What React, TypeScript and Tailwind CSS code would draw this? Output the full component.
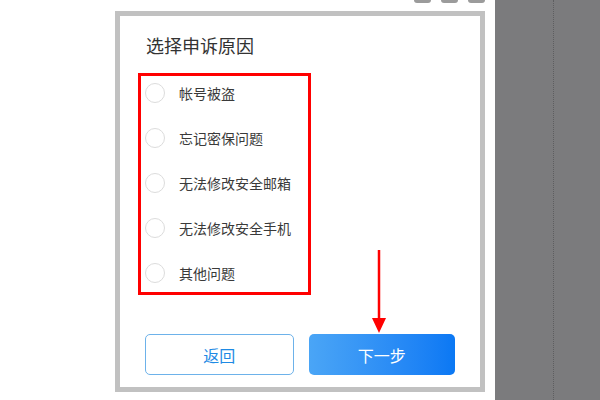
const reasons = ['帐号被盗', '忘记密保问题', '无法修改安全邮箱', '无法修改安全手机', '其他问题'];

export default function App() {
  return (
    <div
      className="flex h-[400px] w-[600px] overflow-hidden bg-white"
      style={{ fontFamily: '"Noto Sans CJK SC", "Noto Sans", sans-serif' }}
    >
      {/* Page area */}
      <div className="flex w-[495px] flex-col">
        {/* Window buttons, cut off at the top */}
        <div className="flex h-[11px] items-start justify-end gap-[10px] pr-[10px]">
          <span className="h-[3px] w-[17px] rounded-b-[4px] bg-[#9b9b9b]" />
          <span className="h-[3px] w-[17px] rounded-b-[4px] bg-[#9b9b9b]" />
          <span className="h-[3px] w-[17px] rounded-b-[4px] bg-[#9b9b9b]" />
        </div>

        {/* Dialog */}
        <div className="relative ml-[115px] flex h-[381px] w-[370px] flex-col border-[5px] border-[#c1c1c1] bg-white">
          <h3 className="pl-[26px] pt-[17px] text-[18px] leading-[24px] font-normal text-[#333]">选择申诉原因</h3>

          <div className="ml-[18px] mt-[16px] flex w-[173px] flex-col gap-[25px] border-[3px] border-[#ff0000] pb-[9px] pl-[4px] pt-[7px]">
            {reasons.map((r) => (
              <label key={r} className="flex h-[20px] items-center gap-[14px]">
                <span className="h-[20px] w-[20px] shrink-0 rounded-full border border-[#dcdcdc] bg-white" />
                <span className="text-[14px] leading-[20px] text-[#3a3a3a]">{r}</span>
              </label>
            ))}
          </div>

          <div className="mt-[39px] flex gap-[15px] px-[25px]">
            <button className="h-[41px] flex-1 rounded-[5px] border border-[#6db2ea] bg-white text-[16px] text-[#1e8ae4]">
              返回
            </button>
            <button className="h-[41px] flex-1 rounded-[5px] bg-gradient-to-r from-[#4aa5f6] to-[#0a78f4] text-[16px] text-white">
              下一步
            </button>
          </div>

          {/* Annotation arrow */}
          <svg className="absolute left-[252px] top-[234px]" width="14" height="83" viewBox="0 0 14 83">
            <line x1="7" y1="0" x2="7" y2="72" stroke="#ff0000" strokeWidth="2.5" />
            <path d="M0 68 L14 68 L7 83 Z" fill="#ff0000" />
          </svg>
        </div>
      </div>

      {/* Grey side panel */}
      <div className="flex flex-1 bg-[#7b7b7d] pl-[58px]">
        <div className="h-full border-l border-dotted border-[#5e5e60]" />
      </div>
    </div>
  );
}
